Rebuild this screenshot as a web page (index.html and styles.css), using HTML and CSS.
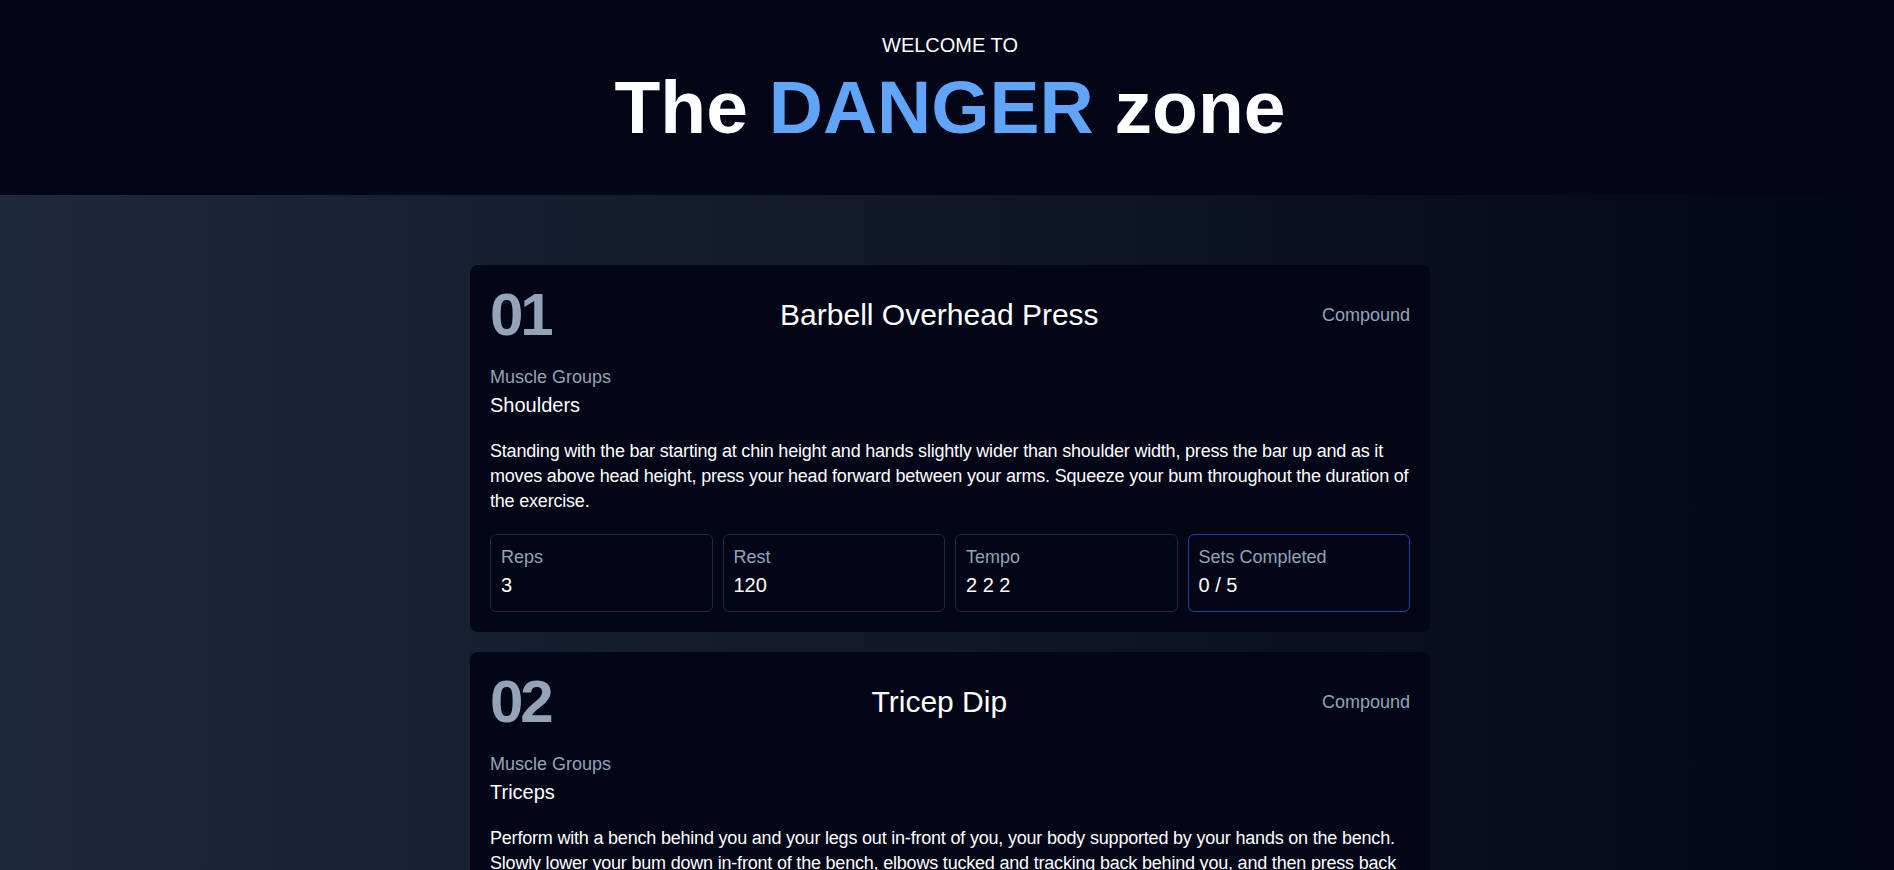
FILE: index.html
```html
<!DOCTYPE html>
<html lang="en">
<head>
<meta charset="utf-8">
<title>The DANGER zone</title>
<link rel="stylesheet" href="styles.css">
</head>
<body>
<header class="site-header">
  <p class="welcome">WELCOME TO</p>
  <h1 class="site-title">The <span class="accent">DANGER</span> zone</h1>
</header>
<main class="main">
  <div class="list">
    <article class="card">
      <div class="card-head">
        <span class="card-num">01</span>
        <h2 class="card-title">Barbell Overhead Press</h2>
        <span class="card-type">Compound</span>
      </div>
      <p class="label">Muscle Groups</p>
      <p class="muscles">Shoulders</p>
      <p class="desc">Standing with the bar starting at chin height and hands slightly wider than shoulder width, press the bar up and as it moves above head height, press your head forward between your arms. Squeeze your bum throughout the duration of the exercise.</p>
      <div class="stats">
        <div class="stat"><p class="stat-label">Reps</p><p class="stat-value">3</p></div>
        <div class="stat"><p class="stat-label">Rest</p><p class="stat-value">120</p></div>
        <div class="stat"><p class="stat-label">Tempo</p><p class="stat-value">2 2 2</p></div>
        <div class="stat stat-active"><p class="stat-label">Sets Completed</p><p class="stat-value">0 / 5</p></div>
      </div>
    </article>
    <article class="card">
      <div class="card-head">
        <span class="card-num">02</span>
        <h2 class="card-title">Tricep Dip</h2>
        <span class="card-type">Compound</span>
      </div>
      <p class="label">Muscle Groups</p>
      <p class="muscles">Triceps</p>
      <p class="desc">Perform with a bench behind you and your legs out in-front of you, your body supported by your hands on the bench. Slowly lower your bum down in-front of the bench, elbows tucked and tracking back behind you, and then press back up to the starting position.</p>
      <div class="stats">
        <div class="stat"><p class="stat-label">Reps</p><p class="stat-value">8</p></div>
        <div class="stat"><p class="stat-label">Rest</p><p class="stat-value">60</p></div>
        <div class="stat"><p class="stat-label">Tempo</p><p class="stat-value">2 1 2</p></div>
        <div class="stat stat-active"><p class="stat-label">Sets Completed</p><p class="stat-value">0 / 3</p></div>
      </div>
    </article>
  </div>
</main>
</body>
</html>
```
FILE: styles.css
```css
html {
  scrollbar-width: none;
}
html::-webkit-scrollbar {
  width: 0;
  height: 0;
}
* {
  box-sizing: border-box;
}
body {
  margin: 0;
  font-family: "Liberation Sans", Arial, sans-serif;
  color: #ffffff;
  background: #020617;
}
p, h1, h2 {
  margin: 0;
}
.site-header {
  background: #020617;
  height: 195px;
  padding: 31px 0 0 6px;
  text-align: center;
}
.welcome {
  font-size: 20px;
  line-height: 28px;
}
.site-title {
  margin-top: 11px;
  font-size: 75px;
  line-height: 75px;
  font-weight: 700;
}
.accent {
  color: #60a5fa;
}
.main {
  min-height: 700px;
  background: linear-gradient(to right, #1e293b, #020617);
  padding: 70px 0 40px 6px;
  display: flex;
  justify-content: center;
}
.list {
  width: 960px;
  display: flex;
  flex-direction: column;
  gap: 20px;
}
.card {
  background: #020617;
  border-radius: 8px;
  padding: 20px;
}
.card-head {
  display: flex;
  justify-content: space-between;
  align-items: center;
  height: 60px;
  margin-bottom: 18px;
}
.card-num {
  font-size: 60px;
  line-height: 60px;
  font-weight: 700;
  letter-spacing: -0.05em;
  margin-right: 6px;
  color: #94a3b8;
}
.card-title {
  font-size: 30px;
  line-height: 36px;
  font-weight: 400;
}
.card-type {
  font-size: 18px;
  line-height: 28px;
  color: #94a3b8;
}
.label {
  font-size: 18px;
  line-height: 28px;
  color: #94a3b8;
}
.muscles {
  font-size: 20px;
  line-height: 28px;
}
.desc {
  margin-top: 20px;
  font-size: 18px;
  line-height: 24.75px;
  letter-spacing: -0.2px;
}
.stats {
  margin-top: 21px;
  display: grid;
  grid-template-columns: repeat(4, 1fr);
  gap: 10px;
}
.stat {
  border: 1px solid #1e293b;
  border-radius: 6px;
  padding: 10px 10px 12px;
}
.stat-active {
  border-color: #1e40af;
}
.stat-label {
  font-size: 18px;
  line-height: 24px;
  color: #94a3b8;
}
.stat-value {
  margin-top: 2px;
  font-size: 20px;
  line-height: 28px;
}
```
